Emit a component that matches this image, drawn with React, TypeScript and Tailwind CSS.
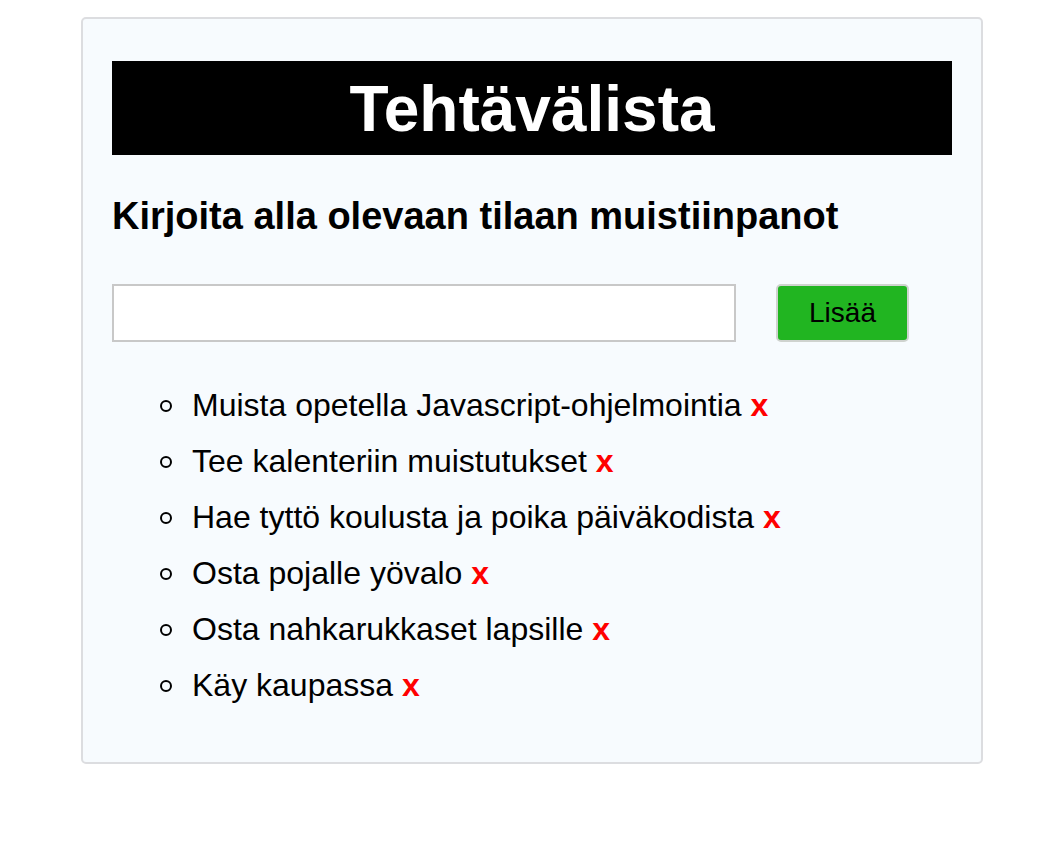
const tasks = [
  'Muista opetella Javascript-ohjelmointia',
  'Tee kalenteriin muistutukset',
  'Hae tyttö koulusta ja poika päiväkodista',
  'Osta pojalle yövalo',
  'Osta nahkarukkaset lapsille',
  'Käy kaupassa',
]

export default function App() {
  return (
    <div className="min-h-[850px] bg-white pt-[17px] pl-[81px] font-['Liberation_Sans',Arial,sans-serif] text-black">
      <div className="w-[902px] rounded-[5px] border-2 border-[#dcdde0] bg-[#f7fbfe] px-[29px] pt-[42px] pb-[49px]">
        <h1 className="h-[94px] bg-black text-center text-[64px] leading-[96px] font-bold text-white">
          Tehtävälista
        </h1>
        <h3 className="mt-[40px] text-[38px] leading-[43px] font-bold">
          Kirjoita alla olevaan tilaan muistiinpanot
        </h3>
        <div className="mt-[46px] flex items-center gap-[40px]">
          <input
            type="text"
            className="h-[58px] w-[624px] border-2 border-[#c8c8c8] bg-white px-2 text-[26px] outline-none"
          />
          <button className="h-[58px] w-[133px] rounded-[5px] border-2 border-[#cfd3cf] bg-[#21b521] text-[28px] text-black">
            Lisää
          </button>
        </div>
        <ul className="mt-[35px] pl-[48px] text-[32px] leading-[56px]">
          {tasks.map((t) => (
            <li key={t} className="flex items-center">
              <span className="mr-[20px] mt-[2px] h-[12px] w-[12px] shrink-0 rounded-full border-2 border-black" />
              <span>
                {t} <span className="font-bold text-[#ff0000]">x</span>
              </span>
            </li>
          ))}
        </ul>
      </div>
    </div>
  )
}
